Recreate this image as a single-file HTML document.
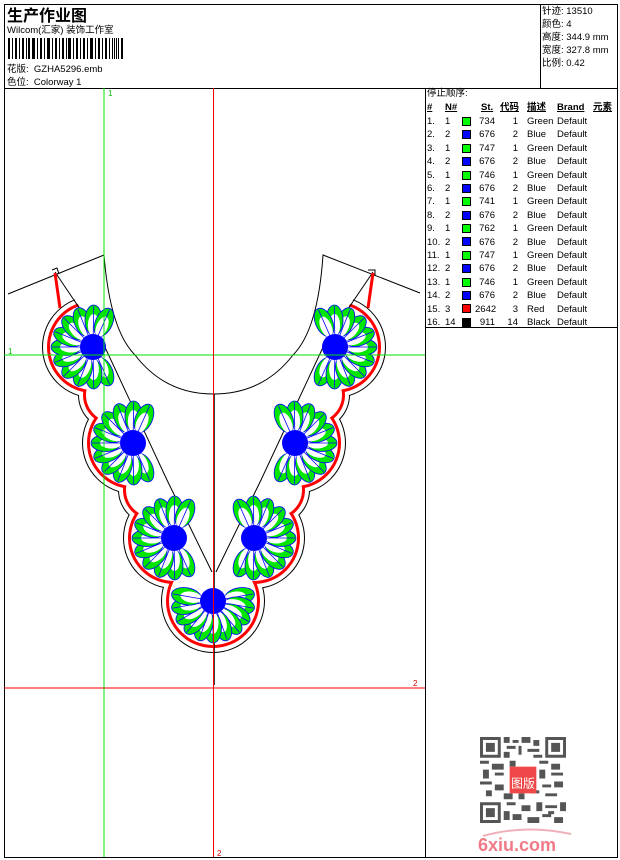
<!DOCTYPE html>
<html><head><meta charset="utf-8"><style>
body{margin:0;background:#fff;width:620px;height:860px;position:relative;overflow:hidden;font-family:"Liberation Sans","Noto Sans CJK SC",sans-serif;color:#000}
.a{position:absolute;white-space:nowrap}
.t{font-size:9.5px;line-height:13.4px}
.u{text-decoration:underline;font-weight:bold}
.sw{position:absolute;width:9px;height:9px;border:1px solid #000;box-sizing:border-box}
</style></head><body>
<div class="a" style="left:4px;top:4px;width:612px;height:852px;border:1px solid #000"></div>
<div class="a" style="left:4px;top:88px;width:613px;height:1px;background:#000"></div>
<div class="a" style="left:540px;top:4px;width:1px;height:84px;background:#000"></div>
<div class="a" style="left:425px;top:88px;width:1px;height:769px;background:#000"></div>
<div class="a" style="left:425px;top:327px;width:192px;height:1px;background:#000"></div>

<div class="a" style="left:7px;top:2px;font-size:16px;font-weight:bold;font-family:'Noto Sans CJK SC',sans-serif">生产作业图</div>
<div class="a" style="left:7px;top:22px;font-size:9.5px">Wilcom(汇家) 装饰工作室</div>
<svg class="a" style="left:8px;top:38px" width="120" height="21">
<g fill="#000">
<rect x="0" y="0" width="2" height="21"/><rect x="4" y="0" width="1" height="21"/><rect x="7" y="0" width="2" height="21"/><rect x="11" y="0" width="1" height="21"/><rect x="14" y="0" width="2" height="21"/><rect x="18" y="0" width="1" height="21"/><rect x="20" y="0" width="2" height="21"/><rect x="24" y="0" width="3" height="21"/><rect x="29" y="0" width="1" height="21"/><rect x="32" y="0" width="2" height="21"/><rect x="36" y="0" width="1" height="21"/><rect x="39" y="0" width="3" height="21"/><rect x="44" y="0" width="1" height="21"/><rect x="47" y="0" width="2" height="21"/><rect x="51" y="0" width="1" height="21"/><rect x="54" y="0" width="2" height="21"/><rect x="58" y="0" width="1" height="21"/><rect x="60" y="0" width="3" height="21"/><rect x="65" y="0" width="1" height="21"/><rect x="68" y="0" width="2" height="21"/><rect x="72" y="0" width="1" height="21"/><rect x="75" y="0" width="2" height="21"/><rect x="79" y="0" width="1" height="21"/><rect x="82" y="0" width="3" height="21"/><rect x="87" y="0" width="1" height="21"/><rect x="90" y="0" width="2" height="21"/><rect x="94" y="0" width="1" height="21"/><rect x="97" y="0" width="2" height="21"/><rect x="101" y="0" width="1" height="21"/><rect x="104" y="0" width="1" height="21"/><rect x="106" y="0" width="1" height="21"/><rect x="108" y="0" width="1" height="21"/><rect x="110" y="0" width="1" height="21"/><rect x="113" y="0" width="2" height="21"/>
</g></svg>
<div class="a" style="left:7px;top:61px;font-size:9.5px">花版:&nbsp; GZHA5296.emb</div>
<div class="a" style="left:7px;top:74px;font-size:9.5px">色位:&nbsp; Colorway 1</div>

<div class="a" style="left:542px;top:5px;font-size:9.5px;line-height:13px">针迹: 13510<br>颜色: 4<br>高度: 344.9 mm<br>宽度: 327.8 mm<br>比例: 0.42</div>

<div class="a t" style="left:427px;top:87px">停止顺序:</div>
<div class="a t u" style="left:427px;top:101px">#</div>
<div class="a t u" style="left:445px;top:101px">N#</div>
<div class="a t u" style="left:481px;top:101px">St.</div>
<div class="a t u" style="left:500px;top:101px">代码</div>
<div class="a t u" style="left:527px;top:101px">描述</div>
<div class="a t u" style="left:557px;top:101px">Brand</div>
<div class="a t u" style="left:593px;top:101px">元素</div>

<div class="a t" style="left:427px;top:115px;width:190px">
<div style="position:relative">
<div style="position:absolute;left:0;top:0;line-height:13.4px">1.<br>2.<br>3.<br>4.<br>5.<br>6.<br>7.<br>8.<br>9.<br>10.<br>11.<br>12.<br>13.<br>14.<br>15.<br>16.</div>
<div style="position:absolute;left:18px;top:0;line-height:13.4px">1<br>2<br>1<br>2<br>1<br>2<br>1<br>2<br>1<br>2<br>1<br>2<br>1<br>2<br>3<br>14</div>
<div style="position:absolute;left:48px;width:20px;text-align:right;top:0;line-height:13.4px">734<br>676<br>747<br>676<br>746<br>676<br>741<br>676<br>762<br>676<br>747<br>676<br>746<br>676<br>2642<br>911</div>
<div style="position:absolute;left:70px;width:21px;text-align:right;top:0;line-height:13.4px">1<br>2<br>1<br>2<br>1<br>2<br>1<br>2<br>1<br>2<br>1<br>2<br>1<br>2<br>3<br>14</div>
<div style="position:absolute;left:100px;top:0;line-height:13.4px">Green<br>Blue<br>Green<br>Blue<br>Green<br>Blue<br>Green<br>Blue<br>Green<br>Blue<br>Green<br>Blue<br>Green<br>Blue<br>Red<br>Black</div>
<div style="position:absolute;left:130px;top:0;line-height:13.4px">Default<br>Default<br>Default<br>Default<br>Default<br>Default<br>Default<br>Default<br>Default<br>Default<br>Default<br>Default<br>Default<br>Default<br>Default<br>Default</div>
</div></div>
<div class="sw" style="left:462px;top:117px;background:#00ff00"></div>
<div class="sw" style="left:462px;top:130px;background:#0000ff"></div>
<div class="sw" style="left:462px;top:144px;background:#00ff00"></div>
<div class="sw" style="left:462px;top:157px;background:#0000ff"></div>
<div class="sw" style="left:462px;top:171px;background:#00ff00"></div>
<div class="sw" style="left:462px;top:184px;background:#0000ff"></div>
<div class="sw" style="left:462px;top:197px;background:#00ff00"></div>
<div class="sw" style="left:462px;top:211px;background:#0000ff"></div>
<div class="sw" style="left:462px;top:224px;background:#00ff00"></div>
<div class="sw" style="left:462px;top:237px;background:#0000ff"></div>
<div class="sw" style="left:462px;top:251px;background:#00ff00"></div>
<div class="sw" style="left:462px;top:264px;background:#0000ff"></div>
<div class="sw" style="left:462px;top:278px;background:#00ff00"></div>
<div class="sw" style="left:462px;top:291px;background:#0000ff"></div>
<div class="sw" style="left:462px;top:304px;background:#ff0000"></div>
<div class="sw" style="left:462px;top:318px;background:#000"></div>

<svg class="a" style="left:0;top:0" width="425" height="860">
<defs>
<g id="p">
<ellipse cx="27" cy="0" rx="15" ry="8.5" fill="#00e600" stroke="#0000ff" stroke-width="0.8"/>
<ellipse cx="22" cy="0" rx="11" ry="5.5" fill="#fff"/>
<line x1="0" y1="0" x2="41" y2="0" stroke="#0000ff" stroke-width="0.8"/>
</g>
<g id="L">
<use href="#p" transform="rotate(66)"/><use href="#p" transform="rotate(89)"/><use href="#p" transform="rotate(112)"/><use href="#p" transform="rotate(135)"/><use href="#p" transform="rotate(158)"/><use href="#p" transform="rotate(180)"/><use href="#p" transform="rotate(202)"/><use href="#p" transform="rotate(225)"/><use href="#p" transform="rotate(248)"/><use href="#p" transform="rotate(271)"/><use href="#p" transform="rotate(294)"/>
<circle r="13" fill="#0000ff"/>
</g>
<g id="B">
<use href="#p" transform="rotate(-10)"/><use href="#p" transform="rotate(10)"/><use href="#p" transform="rotate(30)"/><use href="#p" transform="rotate(50)"/><use href="#p" transform="rotate(70)"/><use href="#p" transform="rotate(90)"/><use href="#p" transform="rotate(110)"/><use href="#p" transform="rotate(130)"/><use href="#p" transform="rotate(150)"/><use href="#p" transform="rotate(170)"/><use href="#p" transform="rotate(190)"/>
<circle r="13" fill="#0000ff"/>
</g>
</defs>
<g fill="#000">
<circle cx="93" cy="347" r="51"/><circle cx="133" cy="443" r="51"/><circle cx="174" cy="538" r="51"/><circle cx="213" cy="601" r="52"/>
<circle cx="335" cy="347" r="51"/><circle cx="295" cy="443" r="51"/><circle cx="254" cy="538" r="51"/>
<circle cx="113" cy="395" r="35"/><circle cx="153" cy="490" r="35"/><circle cx="315" cy="395" r="35"/><circle cx="275" cy="490" r="35"/>
</g>
<g fill="#fff">
<circle cx="93" cy="347" r="50"/><circle cx="133" cy="443" r="50"/><circle cx="174" cy="538" r="50"/><circle cx="213" cy="601" r="51"/>
<circle cx="335" cy="347" r="50"/><circle cx="295" cy="443" r="50"/><circle cx="254" cy="538" r="50"/>
<circle cx="113" cy="395" r="34"/><circle cx="153" cy="490" r="34"/><circle cx="315" cy="395" r="34"/><circle cx="275" cy="490" r="34"/>
</g>
<g fill="#f00">
<circle cx="93" cy="347" r="46"/><circle cx="133" cy="443" r="46"/><circle cx="174" cy="538" r="46"/><circle cx="213" cy="601" r="47"/>
<circle cx="335" cy="347" r="46"/><circle cx="295" cy="443" r="46"/><circle cx="254" cy="538" r="46"/>
<circle cx="113" cy="395" r="30"/><circle cx="153" cy="490" r="30"/><circle cx="315" cy="395" r="30"/><circle cx="275" cy="490" r="30"/>
</g>
<g fill="#fff">
<circle cx="93" cy="347" r="43"/><circle cx="133" cy="443" r="43"/><circle cx="174" cy="538" r="43"/><circle cx="213" cy="601" r="44"/>
<circle cx="335" cy="347" r="43"/><circle cx="295" cy="443" r="43"/><circle cx="254" cy="538" r="43"/>
<circle cx="113" cy="395" r="27"/><circle cx="153" cy="490" r="27"/><circle cx="315" cy="395" r="27"/><circle cx="275" cy="490" r="27"/>
</g>
<polygon points="57,272 103,343 167,480 213,572 261,480 325,343 371,272 371,200 57,200" fill="#fff"/>
<g fill="none" stroke="#000" stroke-width="1">
<path d="M8,294 L104,255 Q110,330 135,355 Q165,394 213,394 Q263,394 293,355 Q318,330 323,255 L420,293"/>
<path d="M55,272 L103,343 L167,480 L212,572 M373,272 L325,343 L261,480 L216,572"/>
<path d="M214,394 L214,685" stroke-width="1.5"/>
<path d="M52,270 L57,268 L59,274"/>
<path d="M368,270 L375,270 L375,276"/>
</g>
<g stroke="#f00" stroke-width="3">
<line x1="55" y1="273" x2="60" y2="308"/>
<line x1="373" y1="273" x2="368" y2="308"/>
</g>
<use href="#L" transform="translate(93,347)"/>
<use href="#L" transform="translate(133,443)"/>
<use href="#L" transform="translate(174,538)"/>
<use href="#L" transform="translate(335,347) scale(-1,1)"/>
<use href="#L" transform="translate(295,443) scale(-1,1)"/>
<use href="#L" transform="translate(254,538) scale(-1,1)"/>
<use href="#B" transform="translate(213,601)"/>
<line x1="104" y1="88" x2="104" y2="857" stroke="#00e000" stroke-width="1"/>
<line x1="4" y1="355" x2="425" y2="355" stroke="#00e000" stroke-width="1"/>
<line x1="213.5" y1="88" x2="213.5" y2="857" stroke="#f00" stroke-width="1"/>
<line x1="4" y1="688" x2="425" y2="688" stroke="#f00" stroke-width="1"/>
<text x="108" y="96" font-size="8" fill="#00c000" font-family="Liberation Sans">1</text>
<text x="8" y="354" font-size="8" fill="#00c000" font-family="Liberation Sans">1</text>
<text x="413" y="686" font-size="8" fill="#d00" font-family="Liberation Sans">2</text>
<text x="217" y="856" font-size="8" fill="#d00" font-family="Liberation Sans">2</text>
</svg>

<svg class="a" style="left:480px;top:737px" width="86" height="86" viewBox="0 0 29 29">
<g fill="#555">
<path d="M0,0h7v7h-7zM1,1v5h5v-5zM2,2h3v3h-3z"/>
<path d="M22,0h7v7h-7zM23,1v5h5v-5zM24,2h3v3h-3z"/>
<path d="M0,22h7v7h-7zM1,23v5h5v-5zM2,24h3v3h-3z"/>
<path d="M8,0h2v2h-2zM11,1h2v1h-2zM14,0h3v2h-3zM18,1h2v2h-2zM9,3h3v1h-3zM13,3h1v3h-1zM16,4h4v1h-4zM8,5h2v2h-2zM18,6h3v1h-3zM0,8h3v1h-3zM4,9h4v2h-4zM10,8h2v2h-2zM20,8h3v1h-3zM24,9h3v2h-3zM1,11h2v3h-2zM5,12h3v1h-3zM20,11h2v3h-2zM24,12h4v1h-4zM0,15h4v1h-4zM5,16h3v2h-3zM21,16h3v1h-3zM25,15h3v2h-3zM2,18h2v2h-2zM8,19h3v2h-3zM13,19h2v2h-2zM17,18h3v1h-3zM22,19h4v1h-4zM9,22h3v1h-3zM14,23h3v2h-3zM19,22h2v3h-2zM22,23h4v1h-4zM27,22h2v3h-2zM8,25h2v3h-2zM11,26h3v2h-3zM16,27h4v2h-4zM21,26h3v1h-3zM25,27h3v2h-3zM23,25h2v1h-2z"/>
</g>
<rect x="10" y="10" width="9" height="9" fill="#f04848"/>
<text x="14.5" y="17" font-size="4" fill="#fff" text-anchor="middle" font-family="Noto Sans CJK SC,sans-serif">图版</text>
</svg>
<svg class="a" style="left:475px;top:826px" width="100" height="30">
<path d="M8,10 Q50,-2 96,8" stroke="#f0b0b8" stroke-width="2" fill="none"/>
<text x="3" y="25" font-size="18" font-weight="bold" fill="#f07a88" font-family="Liberation Sans">6xiu.com</text>
</svg>
</body></html>
